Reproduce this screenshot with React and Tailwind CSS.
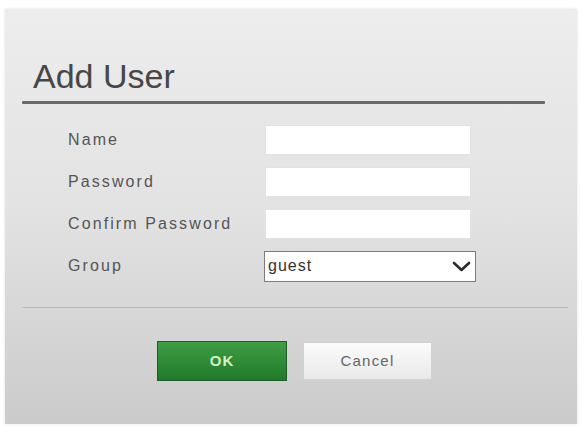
import React from "react";

const font = { fontFamily: '"Liberation Sans", Arial, sans-serif' };

function Row({ label, children }) {
  return (
    <div className="flex items-center h-[30px]">
      <div className="w-[199px] pl-[2px] text-[16px] tracking-[2.1px] text-[#555] leading-none">{label}</div>
      {children}
    </div>
  );
}

function TextBox() {
  return <div className="w-[206px] h-[30px] bg-white border border-[#e2e2e2]" />;
}

export default function App() {
  return (
    <div className="w-[582px] h-[426px] bg-white pt-[9px] pl-[5px] pr-[5px] pb-[2px]" style={font}>
      <div className="w-full h-full bg-gradient-to-b from-[#ededed] via-[#e2e2e2] to-[#cbcbcb] shadow-[0_0_3px_rgba(0,0,0,0.12)] flex flex-col">
        <div className="pt-[50px] pl-[28px] text-[34px] leading-none text-[#474747]">Add User</div>
        <div className="mt-[8px] ml-[17px] w-[523px] h-[3px] bg-[#6a6a6a] rounded-[1px]" />
        <div className="mt-[21px] ml-[61px] flex flex-col gap-[12px]">
          <Row label="Name"><TextBox /></Row>
          <Row label="Password"><TextBox /></Row>
          <Row label="Confirm Password"><TextBox /></Row>
          <Row label="Group">
            <div className="-ml-[1px] w-[212px] h-[31px] bg-white border border-[#7c7c7c] flex items-center justify-between pl-[3px] pr-[4px]">
              <span className="text-[16px] tracking-[1px] text-[#333] leading-none">guest</span>
              <svg width="19" height="11" viewBox="0 0 19 11">
                <path d="M2 2 L9.5 9 L17 2" fill="none" stroke="#2b2b2b" strokeWidth="2.6" strokeLinecap="round" strokeLinejoin="round" />
              </svg>
            </div>
          </Row>
        </div>
        <div className="mt-[26px] ml-[17px] w-[546px] h-px bg-[#b9b9b9]" />
        <div className="mt-[33px] flex items-start gap-[16px] pl-[152px]">
          <div className="w-[130px] h-[40px] flex items-center justify-center bg-gradient-to-b from-[#3e9e42] to-[#207a2b] border border-[#1d5c22] text-[15px] font-bold tracking-[1px] text-[#d4f0cc]">
            OK
          </div>
          <div className="mt-[1px] w-[129px] h-[38px] flex items-center justify-center bg-gradient-to-b from-[#fbfbfb] to-[#e9e9e9] border border-[#d2d2d2] text-[15px] tracking-[1.2px] text-[#666]">
            Cancel
          </div>
        </div>
      </div>
    </div>
  );
}
